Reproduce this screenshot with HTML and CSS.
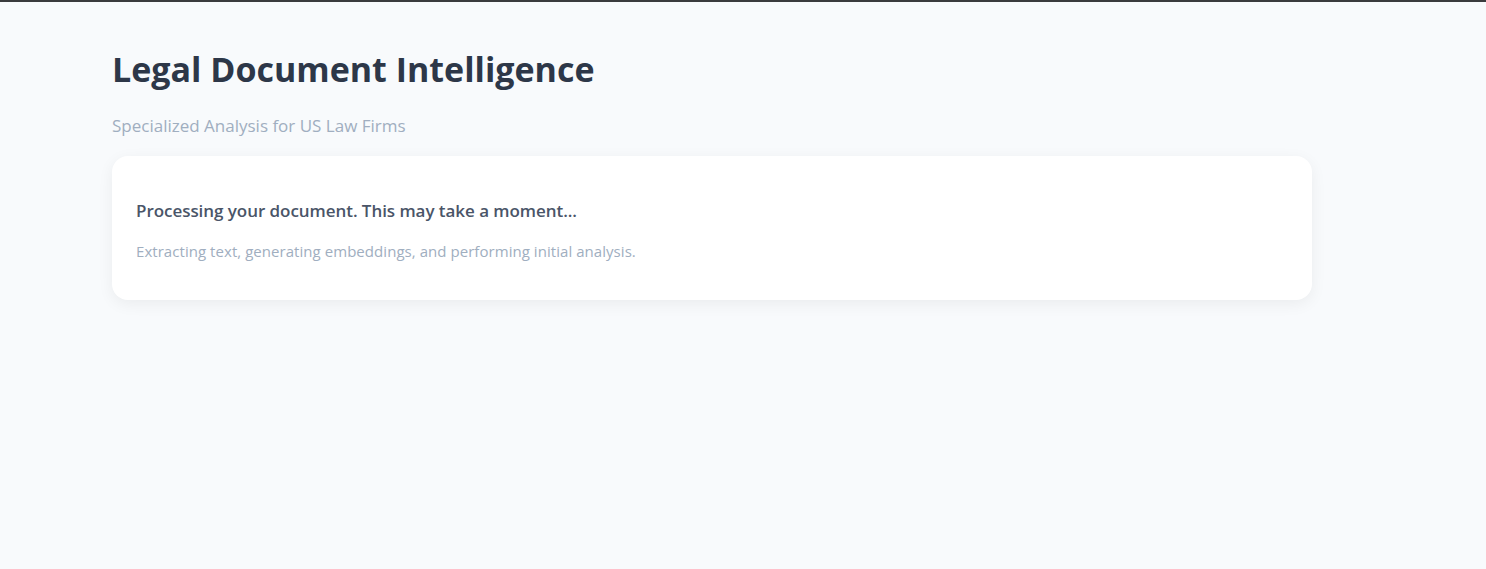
FILE: index.html
```html
<!DOCTYPE html>
<html lang="en">
<head>
<meta charset="utf-8">
<title>Legal Document Intelligence</title>
<link rel="stylesheet" href="styles.css">
</head>
<body>
<div class="topline"></div>
<main class="container">
  <h1 class="title">Legal Document Intelligence</h1>
  <p class="subtitle">Specialized Analysis for US Law Firms</p>
  <section class="card">
    <h2 class="card-title">Processing your document. This may take a moment...</h2>
    <p class="card-text">Extracting text, generating embeddings, and performing initial analysis.</p>
  </section>
</main>
</body>
</html>
```
FILE: styles.css
```css
* { box-sizing: border-box; }
html, body { margin: 0; padding: 0; }
body {
  background: #f8fafc;
  font-family: "Open Sans", "Noto Sans", sans-serif;
  min-height: 569px;
}
.topline { height: 2px; background: #3a3b3d; }
.container {
  width: 1200px;
  margin-left: 112px;
  padding-top: 45px;
}
.title {
  margin: 0;
  font-size: 34px;
  line-height: 44px;
  font-weight: 700;
  color: #2d3748;
}
.subtitle {
  margin: 23px 0 0;
  font-size: 17px;
  line-height: 24px;
  color: #a0aec0;
}
.card {
  margin-top: 18px;
  background: #fff;
  border-radius: 16px;
  box-shadow: 0 4px 16px rgba(0,0,0,0.06);
  padding: 43px 24px 38px;
}
.card-title {
  margin: 0;
  font-size: 17px;
  line-height: 24px;
  font-weight: 600;
  color: #4a5568;
  letter-spacing: -0.05px;
}
.card-text {
  margin: 17px 0 0;
  font-size: 15px;
  line-height: 22px;
  color: #a0aec0;
  letter-spacing: 0.05px;
}
```
